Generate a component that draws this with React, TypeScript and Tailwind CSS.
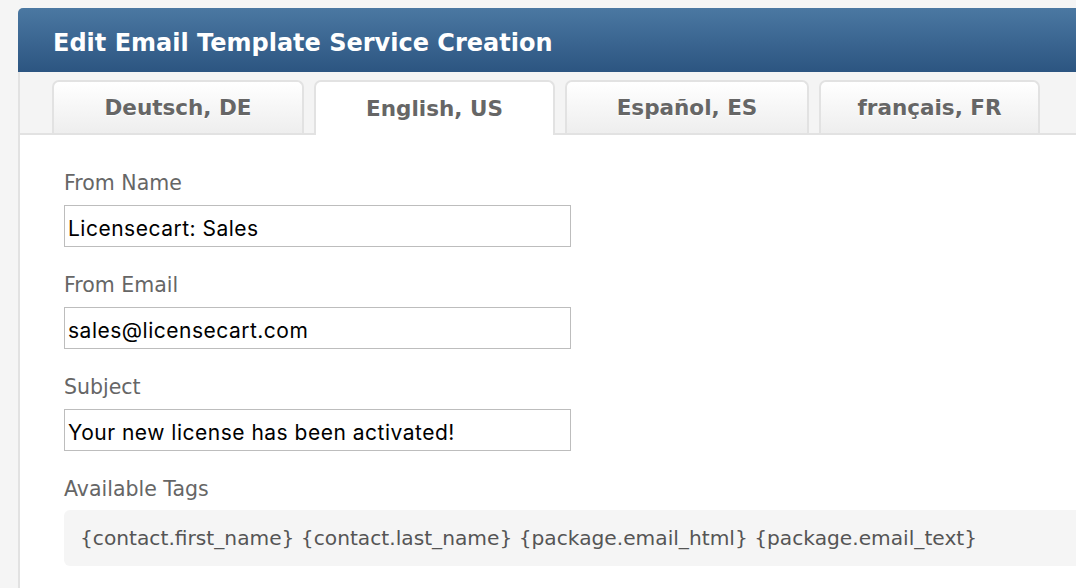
import React from 'react';

const tabs = [
    { label: 'Deutsch, DE', width: 'w-[252px]', active: false },
    { label: 'English, US', width: 'w-[241px]', active: true },
    { label: 'Español, ES', width: 'w-[244px]', active: false },
    { label: 'français, FR', width: 'w-[221px]', active: false },
];

const fields = [
    { label: 'From Name', value: 'Licensecart: Sales' },
    { label: 'From Email', value: 'sales@licensecart.com' },
    { label: 'Subject', value: 'Your new license has been activated!' },
];

export default function App() {
    return (
        <div className="min-h-screen bg-[#f5f5f5] pt-2 pl-[18px] overflow-hidden font-['DejaVu_Sans',sans-serif]">
            <div className="min-h-[580px] bg-white border-l-2 border-[#e2e2e2] rounded-tl-[5px]">
                {/* header */}
                <div className="h-16 -ml-[2px] rounded-tl-[5px] bg-gradient-to-b from-[#4b78a2] to-[#2c5581] pl-[35px] pt-[21px]">
                    <h1 className="text-[24px] leading-[28px] font-bold text-white">
                        Edit Email Template Service Creation
                    </h1>
                </div>

                {/* language tabs */}
                <div className="h-[63px] bg-[#f4f4f4] pt-2 pl-[32px] flex gap-[10px] border-b-2 border-[#e2e2e2]">
                    {tabs.map((tab) => (
                        <div
                            key={tab.label}
                            className={
                                tab.active
                                    ? `${tab.width} h-[55px] -mb-[2px] flex items-center justify-center rounded-t-[7px] border-2 border-b-0 border-[#e2e2e2] bg-white`
                                    : `${tab.width} h-[53px] flex items-center justify-center rounded-t-[7px] border-2 border-b-0 border-[#e2e2e2] bg-gradient-to-b from-white to-[#eeeeee]`
                            }
                        >
                            <span className="text-[21.5px] font-bold text-[#666666] pt-[2px] [text-shadow:0_1px_0_#ffffff]">
                                {tab.label}
                            </span>
                        </div>
                    ))}
                </div>

                {/* form */}
                <div className="pl-[44px] pt-9">
                    {fields.map((f) => (
                        <div key={f.label} className="mb-[26px]">
                            <label className="block text-[20.5px] leading-6 text-[#666666] mb-[10px]">{f.label}</label>
                            <div className="w-[507px] h-[42px] border border-[#bdbdbd] bg-white px-[3px] pt-[5px] flex items-center font-['Inter',sans-serif] text-[21px] tracking-[0.5px] text-black">
                                {f.value}
                            </div>
                        </div>
                    ))}

                    <label className="block text-[20.5px] leading-6 text-[#666666] mb-[9px]">Available Tags</label>
                    <div className="h-14 bg-[#f5f5f5] rounded-l-md pl-4 flex items-center text-[20.2px] text-[#555555]">
                        {'{contact.first_name} {contact.last_name} {package.email_html} {package.email_text}'}
                    </div>
                </div>
            </div>
        </div>
    );
}
